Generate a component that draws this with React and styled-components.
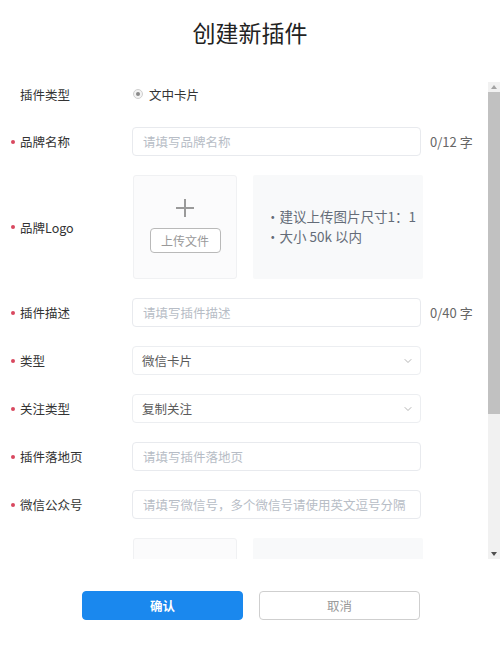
import { createGlobalStyle } from "styled-components";
import styled from "styled-components";
import { ChevronDown } from "lucide-react";

const GlobalStyle = createGlobalStyle`
  html, body {
    margin: 0;
    padding: 0;
    background: #fff;
    font-family: "Noto Sans CJK SC", "Noto Sans", sans-serif;
    color: #333;
  }
  * { box-sizing: border-box; }
`;

const Page = styled.div`
  width: 500px;
  height: 647px;
  display: flex;
  flex-direction: column;
`;

const Title = styled.h1`
  margin: 0;
  height: 82px;
  padding-top: 16px;
  font-size: 23px;
  line-height: 32px;
  font-weight: 400;
  color: #222;
  text-align: center;
`;

const Scroller = styled.div`
  height: 477px;
  display: flex;
`;

const ScrollContent = styled.div`
  flex: 1;
  overflow-y: auto;
  scrollbar-width: none;
  &::-webkit-scrollbar { display: none; }
`;

// drawn scrollbar, headless chrome hides the native one
const ScrollTrack = styled.div`
  width: 12px;
  flex-shrink: 0;
  background: #f1f1f1;
  display: flex;
  flex-direction: column;
  align-items: center;
`;

const ScrollArrow = styled.div`
  height: 10px;
  width: 100%;
  display: flex;
  align-items: center;
  justify-content: center;

  &::after {
    content: "";
    border-left: 3px solid transparent;
    border-right: 3px solid transparent;
    ${(p) =>
      p.$down
        ? "border-top: 4px solid #505050;"
        : "border-bottom: 4px solid #a3a3a3;"}
  }
`;

const ScrollThumb = styled.div`
  width: 100%;
  height: 322px;
  background: #c1c1c1;
`;

const ScrollRest = styled.div`
  flex: 1;
`;

const Row = styled.div`
  display: flex;
  align-items: center;
  min-height: ${(p) => p.$h || 29}px;
  margin-bottom: ${(p) => p.$gap || 19}px;
  padding-left: 10px;
`;

const Label = styled.div`
  width: 122px;
  flex-shrink: 0;
  display: flex;
  align-items: center;
  font-size: 12.5px;
  color: #333;
  padding-left: 10px;
  position: relative;

  &::before {
    content: "";
    display: ${(p) => (p.$required ? "block" : "none")};
    position: absolute;
    left: 1px;
    top: 50%;
    width: 4px;
    height: 4px;
    margin-top: -2px;
    border-radius: 50%;
    background: #d9485f;
  }
`;

const Radio = styled.label`
  display: flex;
  align-items: center;
  gap: 6px;
  margin-left: 1px;
  font-size: 12.5px;
  color: #333;
`;

const RadioDot = styled.span`
  width: 10px;
  height: 10px;
  border-radius: 50%;
  border: 1px solid #cfcfcf;
  background: #f3f3f3;
  display: flex;
  align-items: center;
  justify-content: center;

  &::after {
    content: "";
    width: 4px;
    height: 4px;
    border-radius: 50%;
    background: #8a8a8a;
  }
`;

const Input = styled.input`
  width: 289px;
  height: 29px;
  border: 1px solid #e8eaee;
  border-radius: 4px;
  padding: 0 10px;
  font-family: inherit;
  font-size: 12.5px;
  color: #333;
  outline: none;
  background: #fff;
  text-overflow: clip;

  &::placeholder { color: #b7bdc6; }
`;

const Count = styled.span`
  margin-left: 9px;
  font-size: 13px;
  color: #666;
`;

const Select = styled.div`
  width: 289px;
  height: 29px;
  border: 1px solid #eceef1;
  border-radius: 4px;
  padding: 0 6px 0 9px;
  display: flex;
  align-items: center;
  justify-content: space-between;
  font-size: 12.5px;
  color: #5a5a5a;
`;

const UploadGroup = styled.div`
  display: flex;
  gap: 16px;
  margin-left: 1px;
`;

const UploadBox = styled.div`
  width: 104px;
  height: 104px;
  border: 1px solid #f0f1f3;
  border-radius: 3px;
  background: #fbfbfc;
  display: flex;
  flex-direction: column;
  align-items: center;
  padding-top: 22px;
  gap: 10px;
`;

const UploadButton = styled.button`
  width: 71px;
  height: 25px;
  border: 1px solid #b9b9b9;
  border-radius: 4px;
  background: #fff;
  font-family: inherit;
  font-size: 12px;
  color: #999;
  padding: 0;
`;

const HintBox = styled.div`
  width: 170px;
  height: 104px;
  background: #f8f9fa;
  border-radius: 2px;
  display: flex;
  flex-direction: column;
  justify-content: center;
  padding-left: 13px;
  padding-bottom: 2px;
  font-size: 13.5px;
  line-height: 20px;
  color: #646c78;
`;

const Footer = styled.div`
  flex: 1;
  display: flex;
  justify-content: center;
  align-items: flex-start;
  gap: 16px;
  padding-top: 32px;
  padding-left: 2px;
`;

const Button = styled.button`
  width: 161px;
  height: 29px;
  border-radius: 4px;
  font-family: inherit;
  font-size: 12.5px;
  line-height: 27px;
  padding: 0;
  border: 1px solid ${(p) => (p.$primary ? "#1a88ee" : "#cfcfcf")};
  background: ${(p) => (p.$primary ? "#1a88ee" : "#fff")};
  color: ${(p) => (p.$primary ? "#fff" : "#999")};
  font-weight: ${(p) => (p.$primary ? 700 : 400)};
`;

const PlusIcon = () => (
  <svg width="20" height="20" viewBox="0 0 20 20">
    <path d="M10 1v18M1 10h18" stroke="#9a9a9a" strokeWidth="2" fill="none" />
  </svg>
);

const Upload = ({ hint = true }) => (
  <UploadGroup>
    <UploadBox>
      <PlusIcon />
      <UploadButton>上传文件</UploadButton>
    </UploadBox>
    {hint && (
      <HintBox>
        <div>•建议上传图片尺寸1：1</div>
        <div>•大小 50k 以内</div>
      </HintBox>
    )}
  </UploadGroup>
);

const App = () => {
  return (
    <Page>
      <GlobalStyle />
      <Title>创建新插件</Title>
      <Scroller>
        <ScrollContent>
          <Row $h={24} $gap={21}>
            <Label>插件类型</Label>
            <Radio>
              <RadioDot />
              文中卡片
            </Radio>
          </Row>
          <Row>
            <Label $required>品牌名称</Label>
            <Input placeholder="请填写品牌名称" />
            <Count>0/12 字</Count>
          </Row>
          <Row $h={104}>
            <Label $required>品牌Logo</Label>
            <Upload />
          </Row>
          <Row>
            <Label $required>插件描述</Label>
            <Input placeholder="请填写插件描述" />
            <Count>0/40 字</Count>
          </Row>
          <Row>
            <Label $required>类型</Label>
            <Select>
              微信卡片
              <ChevronDown size={12} color="#b5b5b5" />
            </Select>
          </Row>
          <Row>
            <Label $required>关注类型</Label>
            <Select>
              复制关注
              <ChevronDown size={12} color="#b5b5b5" />
            </Select>
          </Row>
          <Row>
            <Label $required>插件落地页</Label>
            <Input placeholder="请填写插件落地页" />
          </Row>
          <Row>
            <Label $required>微信公众号</Label>
            <Input placeholder="请填写微信号，多个微信号请使用英文逗号分隔" />
          </Row>
          <Row $h={104}>
            <Label $required>二维码</Label>
            <Upload />
          </Row>
          <Row>
            <Label $required>按钮文案</Label>
            <Input placeholder="请填写按钮文案" />
          </Row>
        </ScrollContent>
        <ScrollTrack>
          <ScrollArrow />
          <ScrollThumb />
          <ScrollRest />
          <ScrollArrow $down />
        </ScrollTrack>
      </Scroller>
      <Footer>
        <Button $primary>确认</Button>
        <Button>取消</Button>
      </Footer>
    </Page>
  );
};

export default App;
